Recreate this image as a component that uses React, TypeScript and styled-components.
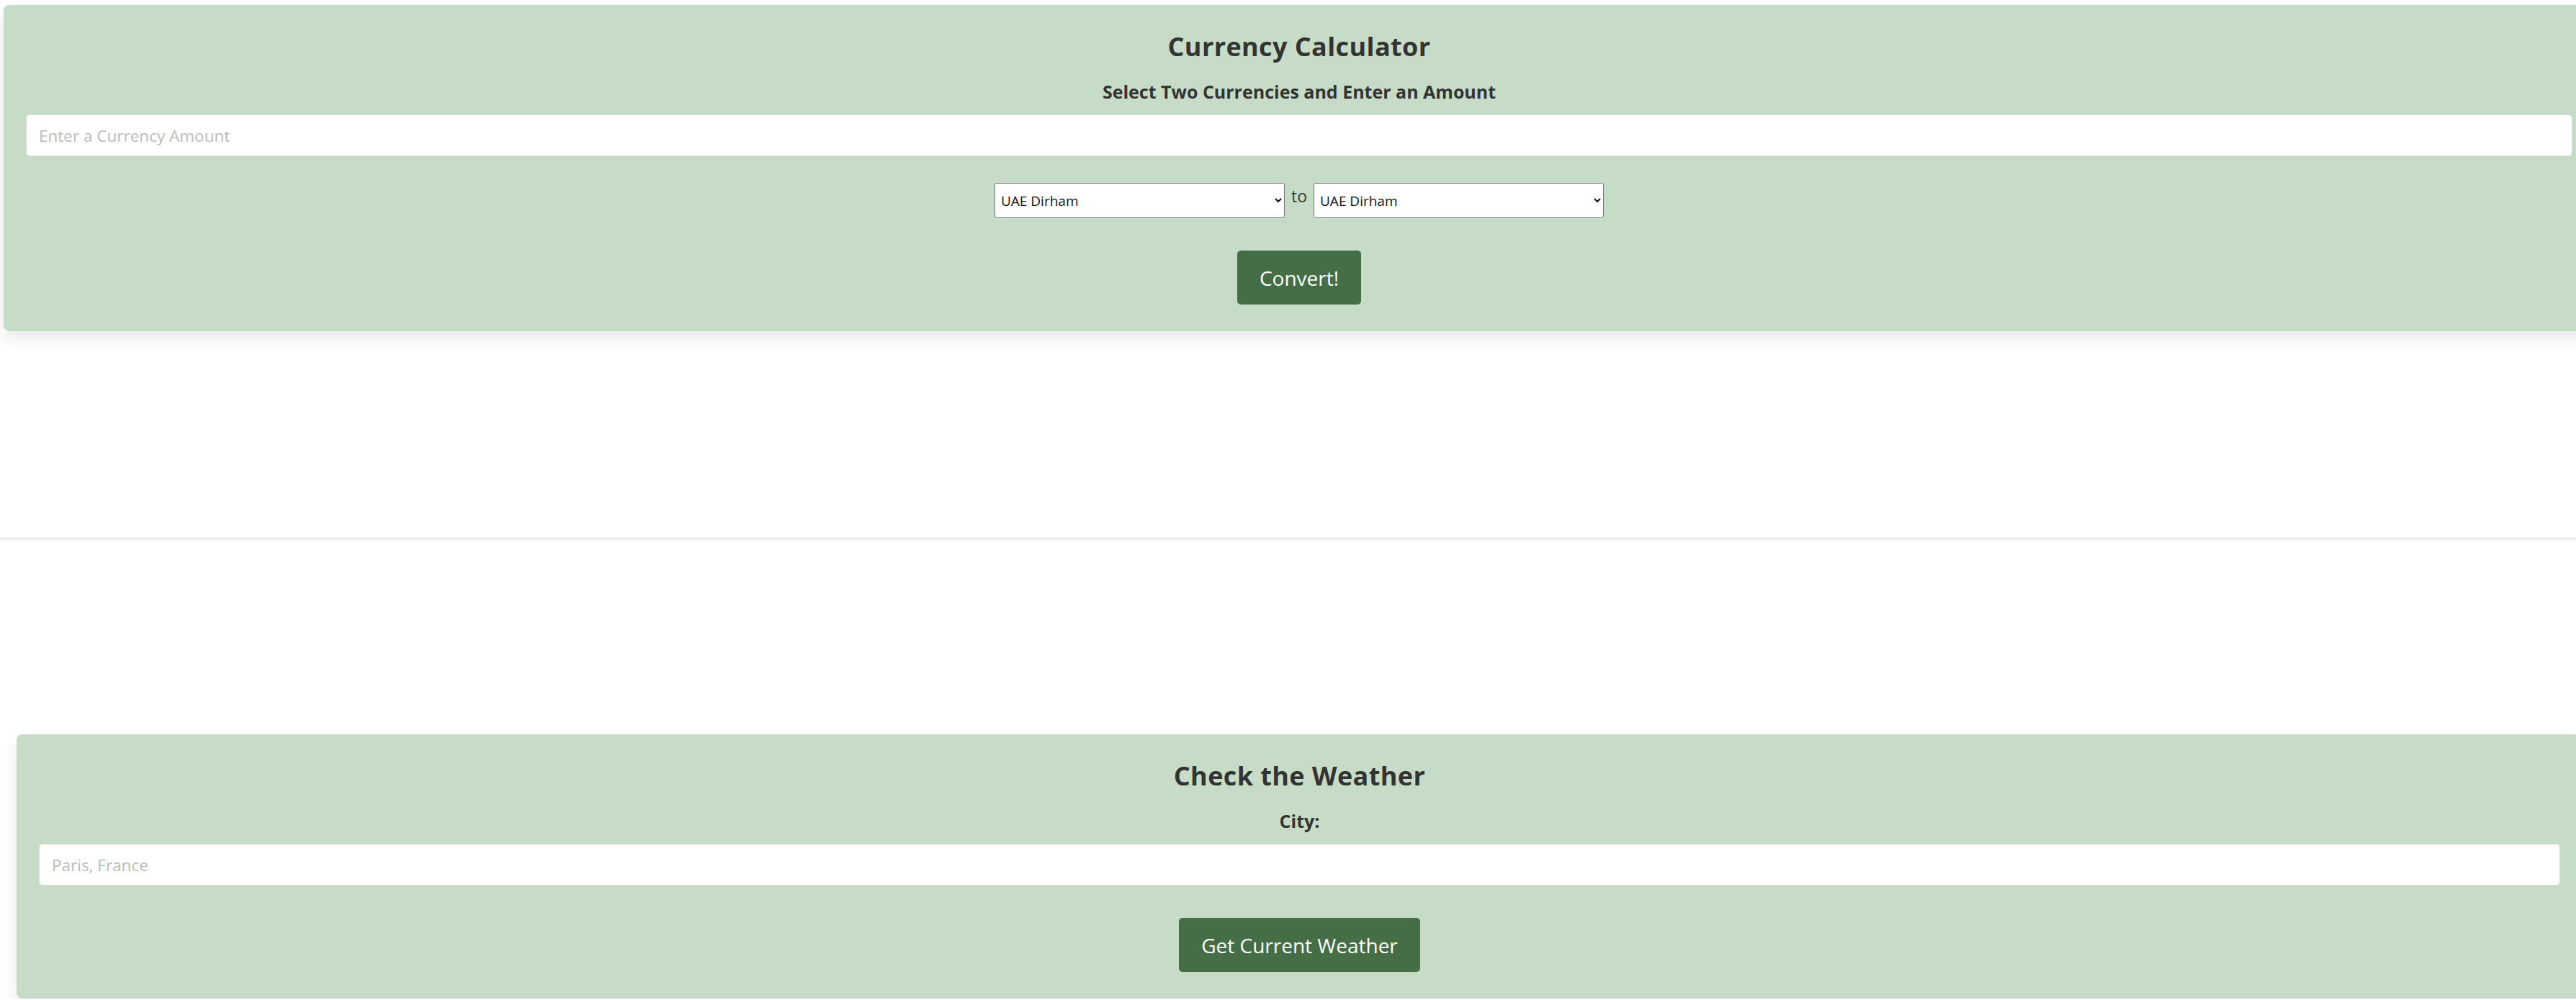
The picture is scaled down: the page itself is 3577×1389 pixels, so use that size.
import React from 'react';
import styled, { createGlobalStyle } from 'styled-components';

const GlobalStyle = createGlobalStyle`
  html, body {
    margin: 0;
    padding: 0;
    background: #ffffff;
    overflow-x: hidden;
  }
  body {
    font-family: "Open Sans", "Noto Sans", Arial, sans-serif;
    color: #333333;
  }
  * {
    box-sizing: border-box;
  }
`;

const Page = styled.main`
  display: flex;
  flex-direction: column;
  padding-top: 7px;
`;

const Section = styled.section<{ $offset: number; $top?: number; $bottom?: number }>`
  padding-left: ${(p) => p.$offset}px;
  padding-top: ${(p) => p.$top ?? 0}px;
  padding-bottom: ${(p) => p.$bottom ?? 0}px;
`;

const Card = styled.div<{ $width: number }>`
  width: ${(p) => p.$width}px;
  background: #c6dcc7;
  border-radius: 8px;
  box-shadow: 0 10px 24px rgba(0, 0, 0, 0.09);
  padding: 36px 31px 37px;
  display: flex;
  flex-direction: column;
  align-items: center;
`;

const Title = styled.h2`
  margin: 0;
  font-family: "Open Sans", sans-serif;
  font-size: 36px;
  line-height: 43px;
  font-weight: 700;
  letter-spacing: 0.4px;
  color: #333333;
`;

const Label = styled.label`
  margin-top: 26px;
  font-family: "Open Sans", sans-serif;
  font-size: 25px;
  line-height: 30px;
  font-weight: 700;
  color: #333333;
`;

const TextInput = styled.input`
  margin-top: 17px;
  width: 100%;
  height: 58px;
  padding: 0 17px;
  border: 1px solid #dcdcdc;
  border-radius: 5px;
  background: #ffffff;
  font-family: "Open Sans", sans-serif;
  font-size: 22.5px;
  color: #333333;
  outline: none;

  &::placeholder {
    color: #bcbcbc;
  }
`;

const PairRow = styled.div`
  margin-top: 37px;
  display: flex;
  align-items: flex-start;
  gap: 9px;
`;

const CurrencySelect = styled.select`
  width: 403px;
  height: 49px;
  padding: 0 4px;
  border: 1px solid #767676;
  border-radius: 3px;
  background: #ffffff;
  font-family: "Open Sans", sans-serif;
  font-size: 19px;
  color: #111111;
`;

const Joiner = styled.span`
  font-family: "Open Sans", sans-serif;
  font-size: 23px;
  line-height: 30px;
  padding-top: 3px;
  color: #3a3a3a;
`;

const ActionButton = styled.button<{ $gap: number }>`
  margin-top: ${(p) => p.$gap}px;
  height: 75px;
  padding: 0 31px;
  border: none;
  border-radius: 5px;
  background: #456e47;
  color: #ffffff;
  font-family: "Open Sans", sans-serif;
  font-size: 28px;
  cursor: pointer;
`;

const Divider = styled.hr`
  margin: 0;
  height: 4px;
  border: none;
  background: #f1f1f1;
`;

const currencies = ['UAE Dirham', 'US Dollar', 'Euro', 'British Pound', 'Japanese Yen'];

const CurrencyPicker: React.FC = () => (
  <CurrencySelect defaultValue="UAE Dirham">
    {currencies.map((c) => (
      <option key={c}>{c}</option>
    ))}
  </CurrencySelect>
);

export default function App() {
  return (
    <>
      <GlobalStyle />
      <Page>
        <Section $offset={5} $bottom={286}>
          <Card $width={3598}>
            <Title>Currency Calculator</Title>
            <Label>Select Two Currencies and Enter an Amount</Label>
            <TextInput placeholder="Enter a Currency Amount" />
            <PairRow>
              <CurrencyPicker />
              <Joiner>to</Joiner>
              <CurrencyPicker />
            </PairRow>
            <ActionButton $gap={45}>Convert!</ActionButton>
          </Card>
        </Section>

        <Divider />

        <Section $offset={23} $top={270}>
          <Card $width={3563}>
            <Title>Check the Weather</Title>
            <Label>City:</Label>
            <TextInput placeholder="Paris, France" />
            <ActionButton $gap={45}>Get Current Weather</ActionButton>
          </Card>
        </Section>
      </Page>
    </>
  );
}
